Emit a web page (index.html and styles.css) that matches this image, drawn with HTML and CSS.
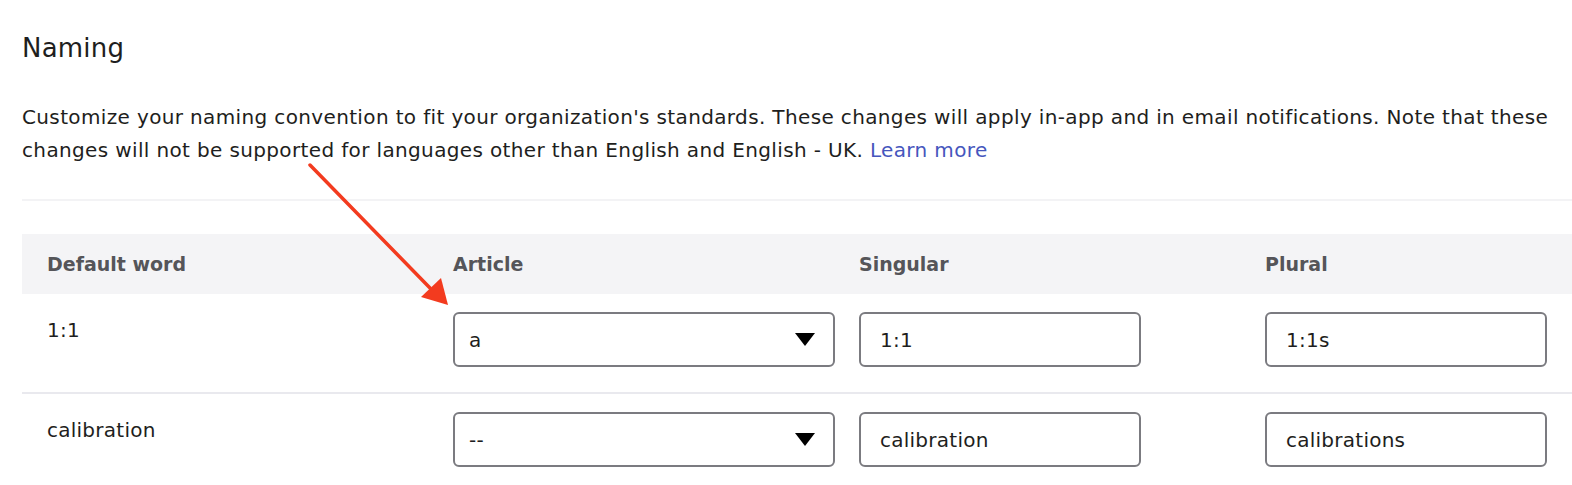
FILE: index.html
```html
<!DOCTYPE html>
<html lang="en">
<head>
    <meta charset="UTF-8">
    <meta name="viewport" content="width=device-width, initial-scale=1.0">
    <title>Naming</title>
    <link rel="stylesheet" href="styles.css">
</head>
<body>
    <div class="naming">
        <h1 class="naming__title">Naming</h1>
        <p class="naming__desc">
            Customize your naming convention to fit your organization's standards. These changes will apply in-app and in email notifications. Note that these changes will not be supported for languages other than English and English - UK. <a href="#" class="naming__link">Learn more</a>
        </p>
        <div class="naming__divider"></div>

        <div class="words-table">
            <div class="words-table__row words-table__head">
                <div class="words-table__cell">Default word</div>
                <div class="words-table__cell">Article</div>
                <div class="words-table__cell">Singular</div>
                <div class="words-table__cell">Plural</div>
            </div>
            <div class="words-table__row">
                <div class="words-table__cell words-table__word">1:1</div>
                <div class="words-table__cell">
                    <div class="select-box">
                        <span>a</span>
                        <span class="select-box__caret"></span>
                    </div>
                </div>
                <div class="words-table__cell"><input class="text-input" type="text" value="1:1"></div>
                <div class="words-table__cell"><input class="text-input" type="text" value="1:1s"></div>
            </div>
            <div class="words-table__row">
                <div class="words-table__cell words-table__word">calibration</div>
                <div class="words-table__cell">
                    <div class="select-box">
                        <span>--</span>
                        <span class="select-box__caret"></span>
                    </div>
                </div>
                <div class="words-table__cell"><input class="text-input" type="text" value="calibration"></div>
                <div class="words-table__cell"><input class="text-input" type="text" value="calibrations"></div>
            </div>
        </div>

        <!-- annotation arrow drawn over the page -->
        <svg class="callout-arrow" width="160" height="160" viewBox="0 0 160 160">
            <line x1="20" y1="15" x2="140" y2="138" stroke="#f33b1f" stroke-width="3.5" stroke-linecap="round"/>
            <polygon points="158,155 131,147 151,128" fill="#f33b1f"/>
        </svg>
    </div>
</body>
</html>
```

FILE: styles.css
```css
body {
    margin: 0;
    padding: 0;
    font-family: "DejaVu Sans", "Open Sans", Arial, sans-serif;
    color: #1e1e20;
    background: #fff;
}
.naming {
    position: relative;
    padding: 28px 0 0 22px;
    overflow: hidden;
    height: 457px;
}
.naming__title {
    margin: 0;
    font-size: 26px;
    font-weight: 400;
    line-height: 40px;
    letter-spacing: 0.2px;
}
.naming__desc {
    margin: 33px 0 0 0;
    padding-right: 10px;
    font-size: 20px;
    line-height: 33px;
    letter-spacing: 0.36px;
}
.naming__link {
    color: #4656bd;
    text-decoration: none;
}
.naming__divider {
    margin-top: 32px;
    height: 2px;
    background: #f3f3f5;
}

.words-table {
    margin-top: 33px;
}
.words-table__row {
    display: grid;
    grid-template-columns: repeat(4, 406px);
    border-bottom: 2px solid #e9e9ee;
}
.words-table__head {
    background: #f4f4f6;
    height: 60px;
    align-items: center;
    border-bottom: none;
    font-weight: 700;
    color: #555559;
}
.words-table__cell {
    padding: 18px 0 25px 25px;
    font-size: 20px;
    letter-spacing: 0.25px;
}
.words-table__head .words-table__cell {
    padding-top: 0;
    padding-bottom: 0;
    font-size: 19px;
    letter-spacing: 0;
}
.words-table__word {
    padding-top: 24px;
}

.select-box {
    width: 382px;
    height: 55px;
    box-sizing: border-box;
    border: 2px solid #7b7b80;
    border-radius: 6px;
    padding: 0 18px 0 14px;
    display: flex;
    align-items: center;
    justify-content: space-between;
    font-size: 20px;
}
.select-box__caret {
    width: 0;
    height: 0;
    border-left: 10px solid transparent;
    border-right: 10px solid transparent;
    border-top: 13px solid #000;
}
.text-input {
    width: 282px;
    height: 55px;
    box-sizing: border-box;
    border: 2px solid #7b7b80;
    border-radius: 6px;
    padding: 0 19px;
    font-family: inherit;
    font-size: 20px;
    letter-spacing: 0.25px;
    color: #1e1e20;
    outline: none;
}

.callout-arrow {
    position: absolute;
    left: 290px;
    top: 150px;
}
```
